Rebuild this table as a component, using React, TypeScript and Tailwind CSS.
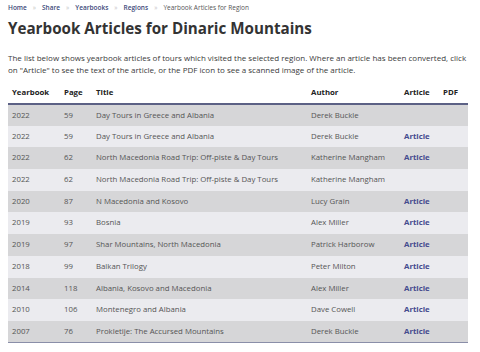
import React from "react";

const ROWS = [
  { year: "2022", page: "59", title: "Day Tours in Greece and Albania", author: "Derek Buckle", article: false },
  { year: "2022", page: "59", title: "Day Tours in Greece and Albania", author: "Derek Buckle", article: true },
  { year: "2022", page: "62", title: "North Macedonia Road Trip: Off-piste & Day Tours", author: "Katherine Mangham", article: true },
  { year: "2022", page: "62", title: "North Macedonia Road Trip: Off-piste & Day Tours", author: "Katherine Mangham", article: false },
  { year: "2020", page: "87", title: "N Macedonia and Kosovo", author: "Lucy Grain", article: true },
  { year: "2019", page: "93", title: "Bosnia", author: "Alex Miller", article: true },
  { year: "2019", page: "97", title: "Shar Mountains, North Macedonia", author: "Patrick Harborow", article: true },
  { year: "2018", page: "99", title: "Balkan Trilogy", author: "Peter Milton", article: true },
  { year: "2014", page: "118", title: "Albania, Kosovo and Macedonia", author: "Alex Miller", article: true },
  { year: "2010", page: "106", title: "Montenegro and Albania", author: "Dave Cowell", article: true },
  { year: "2007", page: "76", title: "Prokletije: The Accursed Mountains", author: "Derek Buckle", article: true },
];

const CRUMBS = ["Home", "Share", "Yearbooks", "Regions"];

export default function App() {
  return (
    <div className="w-[480px] h-[352px] overflow-hidden bg-white px-[8px] pt-[3px] font-['Open_Sans',sans-serif] text-[#333]">
      <nav className="flex items-center gap-[6px] text-[6.5px] leading-[10px]">
        {CRUMBS.map((c) => (
          <React.Fragment key={c}>
            <span className="font-semibold text-[#3d4a7a]">{c}</span>
            <span className="text-[#c4c4c4]">»</span>
          </React.Fragment>
        ))}
        <span className="text-[#555]">Yearbook Articles for Region</span>
      </nav>

      <h1 className="mt-[5px] text-[15.2px] leading-[20px] font-bold text-[#333]">
        Yearbook Articles for Dinaric Mountains
      </h1>

      <p className="mt-[14px] text-[8px] leading-[12px] text-[#3a3a3a]">
        The list below shows yearbook articles of tours which visited the selected region. Where an article has been converted, click
        on "Article" to see the text of the article, or the PDF icon to see a scanned image of the article.
      </p>

      <table className="mt-[6px] w-[460px] table-fixed border-collapse text-[7.8px] text-[#555]">
        <thead>
          <tr className="h-[22px] border-b-2 border-[#5c6185] text-left text-[#222]">
            <th className="pl-[4px] w-[52px] font-bold">Yearbook</th>
            <th className="pl-[4px] w-[32px] font-bold">Page</th>
            <th className="pl-[4px] w-[215px] font-bold">Title</th>
            <th className="pl-[4px] w-[93px] font-bold">Author</th>
            <th className="pl-[4px] w-[39px] font-bold">Article</th>
            <th className="pl-[4px] font-bold">PDF</th>
          </tr>
        </thead>
        <tbody className="border-b border-[#8a8ea8]">
          {ROWS.map((r, i) => (
            <tr key={i} className={`h-[21.7px] ${i % 2 === 0 ? "bg-[#d6d6d8]" : "bg-[#ebebef]"}`}>
              <td className="pl-[4px]">{r.year}</td>
              <td className="pl-[4px]">{r.page}</td>
              <td className="pl-[4px]">{r.title}</td>
              <td className="pl-[4px]">{r.author}</td>
              <td className="pl-[4px] font-bold text-[#454a8e]">{r.article ? "Article" : ""}</td>
              <td className="pl-[4px]"></td>
            </tr>
          ))}
        </tbody>
      </table>
    </div>
  );
}
